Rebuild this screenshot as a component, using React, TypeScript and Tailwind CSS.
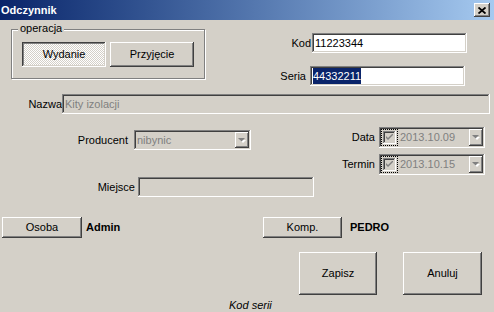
const raised =
  "shadow-[inset_-1px_-1px_#404040,inset_1px_1px_#ffffff,inset_-2px_-2px_#808080,inset_2px_2px_#d4d0c8]";
const sunken =
  "shadow-[inset_-1px_-1px_#ffffff,inset_1px_1px_#808080,inset_-2px_-2px_#d4d0c8,inset_2px_2px_#404040]";
const pressed =
  "shadow-[inset_-1px_-1px_#ffffff,inset_1px_1px_#404040,inset_-2px_-2px_#d4d0c8,inset_2px_2px_#808080]";

const Arrow = () => (
  <svg width="8" height="5" viewBox="0 0 8 5">
    <path d="M1 1h6l-3 3z" fill="#ffffff" transform="translate(1 1)" />
    <path d="M0 0h7l-3.5 3.5z" fill="#808080" />
  </svg>
);

const DropBtn = () => (
  <div className={`w-[14px] h-full flex items-center justify-center bg-[#d4d0c8] ${raised}`}>
    <Arrow />
  </div>
);

const Check = () => (
  <div className="w-[17px] h-[17px] border border-dotted border-black flex items-center justify-center">
    <div className={`w-[13px] h-[13px] flex items-center justify-center ${sunken}`}>
      <svg width="7" height="7" viewBox="0 0 7 7">
        <path d="M0 2l2 2 5-5v2l-5 5-2-2z" fill="#808080" />
      </svg>
    </div>
  </div>
);

type DateProps = { label: string; value: string; top: string };

const DateRow = ({ label, value, top }: DateProps) => (
  <div className={`flex items-center h-[21px] ${top}`}>
    <span className="w-[35px] text-right">{label}</span>
    <div className={`ml-[4px] w-[106px] h-full p-[2px] flex items-center ${sunken}`}>
      <Check />
      <span className="ml-[2px] flex-1 text-[#808080]">{value}</span>
      <DropBtn />
    </div>
  </div>
);

const Btn = ({ label, className }: { label: string; className: string }) => (
  <button className={`flex items-center justify-center bg-[#d4d0c8] ${raised} ${className}`}>
    {label}
  </button>
);

export default function App() {
  return (
    <div className="w-[494px] h-[312px] overflow-hidden bg-[#d4d0c8] text-black text-[11px] leading-[13px] font-['Liberation_Sans',Arial,sans-serif]">
      {/* title */}
      <div className="h-[20px] flex items-center justify-between pl-[1px] pr-[4px] bg-linear-to-r from-[#0a246a] to-[#a6caf0]">
        <span className="text-white font-bold text-[11px]">Odczynnik</span>
        <div className={`w-[16px] h-[14px] flex items-center justify-center bg-[#d4d0c8] ${raised}`}>
          <svg width="8" height="7" viewBox="0 0 8 7">
            <path d="M0.5 0.5l7 6M7.5 0.5l-7 6" stroke="#000" strokeWidth="1.8" />
          </svg>
        </div>
      </div>

      {/* operacja + kod/seria */}
      <div className="flex h-[74px]">
        <div className="pl-[11px] pt-[9px]">
          <div className="relative w-[194px] h-[50px] border border-[#808080] shadow-[inset_1px_1px_#ffffff,1px_1px_#ffffff] pl-[10px] pt-[12px] flex gap-[4px]">
            <span className="absolute left-[6px] top-[-8px] px-[2px] bg-[#d4d0c8]">operacja</span>
            <button className={`w-[84px] h-[25px] flex items-center justify-center bg-[repeating-conic-gradient(#ffffff_0_25%,#d4d0c8_0_50%)] bg-[length:2px_2px] ${pressed}`}>
              Wydanie
            </button>
            <Btn label="Przyjęcie" className="w-[84px] h-[25px]" />
          </div>
        </div>
        <div className="flex flex-col pt-[13px]">
          <div className="flex items-center h-[20px]">
            <span className="w-[107px] text-right pr-[1px]">Kod</span>
            <div className={`w-[155px] h-full bg-white pl-[3px] flex items-center ${sunken}`}>11223344</div>
          </div>
          <div className="flex items-center h-[20px] mt-[13px]">
            <span className="w-[105px] text-right pr-[4px]">Seria</span>
            <div className={`w-[155px] h-full bg-white pl-[3px] flex items-center ${sunken}`}>
              <span className="bg-[#0a246a] text-white h-[16px] flex items-center">44332211</span>
            </div>
          </div>
        </div>
      </div>

      {/* nazwa */}
      <div className="flex items-center h-[20px]">
        <span className="w-[62px] text-right">Nazwa</span>
        <div className={`w-[428px] h-full pl-[3px] flex items-center text-[#808080] ${sunken}`}>Kity izolacji</div>
      </div>

      {/* producent / miejsce / data / termin */}
      <div className="flex">
        <div className="w-[340px] flex flex-col">
          <div className="flex items-center h-[20px] mt-[16px]">
            <span className="w-[128px] text-right">Producent</span>
            <div className={`ml-[6px] w-[117px] h-full p-[2px] flex items-center ${sunken}`}>
              <span className="flex-1 pl-[1px] text-[#808080]">nibynic</span>
              <DropBtn />
            </div>
          </div>
          <div className="flex items-center h-[20px] mt-[27px]">
            <span className="w-[135px] text-right">Miejsce</span>
            <div className={`ml-[3px] w-[176px] h-full ${sunken}`} />
          </div>
        </div>
        <div className="flex flex-col">
          <DateRow label="Data" value="2013.10.09" top="mt-[13px]" />
          <DateRow label="Termin" value="2013.10.15" top="mt-[6px]" />
        </div>
      </div>

      {/* osoba / komp */}
      <div className="flex items-center h-[21px] mt-[20px]">
        <div className="w-[263px] flex items-center h-full">
          <Btn label="Osoba" className="ml-[2px] w-[80px] h-full" />
          <span className="ml-[4px] font-bold">Admin</span>
        </div>
        <Btn label="Komp." className="w-[79px] h-full" />
        <span className="ml-[8px] font-bold">PEDRO</span>
      </div>

      {/* zapisz / anuluj */}
      <div className="flex h-[43px] mt-[14px]">
        <Btn label="Zapisz" className="ml-[299px] w-[78px] h-full" />
        <Btn label="Anuluj" className="ml-[26px] w-[79px] h-full" />
      </div>

      <div className="pl-[229px] mt-[4px] italic">Kod serii</div>
    </div>
  );
}
